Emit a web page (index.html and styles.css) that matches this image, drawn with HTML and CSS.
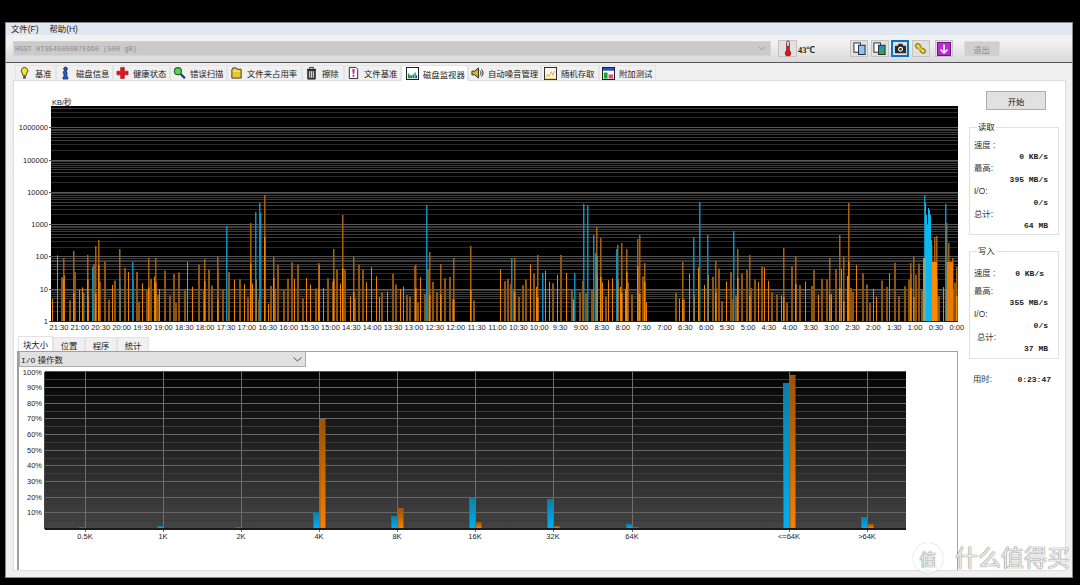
FILE: index.html
```html
<!DOCTYPE html>
<html lang="zh-CN">
  <head>
    <meta charset="UTF-8" />
    <title>HD Tune Pro</title>
    <link rel="stylesheet" href="styles.css">
  </head>
  <body>
    <svg class="defs" width="0" height="0">
      <symbol id="i-bulb" viewBox="0 0 14 14"><path d="M7 1a3.6 3.6 0 0 0-2.4 6.2L5.6 10h2.8l1-2.8A3.6 3.6 0 0 0 7 1z" fill="#f4e22a" stroke="#333"/><rect x="5.5" y="10.5" width="3" height="2.5" fill="#444"/></symbol>
      <symbol id="i-info" viewBox="0 0 14 14"><circle cx="7" cy="2.6" r="1.9" fill="#1f5fd0" stroke="#123"/><path d="M4.6 5.5h4v6h1v2H4.300v-2h1v-4h-.7z" fill="#1f5fd0" stroke="#123" stroke-width=".7"/></symbol>
      <symbol id="i-cross" viewBox="0 0 14 14"><path d="M5 1h4v4h4v4H9v4H5V9H1V5h4z" fill="#e3131b" stroke="#811" stroke-width=".6"/></symbol>
      <symbol id="i-lens" viewBox="0 0 14 14"><circle cx="5.300" cy="5" r="3.800" fill="#63d04a" stroke="#1d6a2c" stroke-width="1.200"/><path d="M8.200 8l4.600 4.600" stroke="#123a8c" stroke-width="2.400"/></symbol>
      <symbol id="i-folder" viewBox="0 0 14 14"><path d="M2 3.500l1-2h4l1 1.500h4v9.500H2z" fill="#e8c72a" stroke="#333"/><path d="M3 5h8" stroke="#fff3a8"/></symbol>
      <symbol id="i-trash" viewBox="0 0 14 14"><path d="M2 2.500h10v1.500H2z" fill="#333"/><path d="M3 4h8v9.500H3z" fill="#555" stroke="#111"/><path d="M5 5v7M7 5v7M9 5v7" stroke="#ddd"/><path d="M5 2.500V1h4v1.500" fill="none" stroke="#222"/></symbol>
      <symbol id="i-doc" viewBox="0 0 14 14"><path d="M2.500 1h7l2 2v10h-9z" fill="#fff" stroke="#222"/><path d="M5.500 3h3l-.8 5H6.300z" fill="#d11fb5"/><circle cx="7" cy="10" r="1.200" fill="#d11fb5"/></symbol>
      <symbol id="i-monitor" viewBox="0 0 14 14"><rect x=".5" y=".5" width="13" height="13" fill="#fff" stroke="#111"/><path d="M2 12V7h1.500v5zM5 12V9h1.500v3zM9 12V6h1.500v6z" fill="#12a02c"/><path d="M3.500 12V9H5v3zM7 12V8h1.500v4zM10.500 12V9H12v3z" fill="#1c49c9"/></symbol>
      <symbol id="i-speaker" viewBox="0 0 14 14"><path d="M1 5h3l4-3.500v11L4 9H1z" fill="#d9b81e" stroke="#222"/><path d="M9.500 4.500a3 3 0 0 1 0 5M11 3a5 5 0 0 1 0 8" fill="none" stroke="#222"/></symbol>
      <symbol id="i-random" viewBox="0 0 14 14"><rect x=".5" y=".5" width="13" height="13" fill="#fdf8ea" stroke="#222"/><path d="M2 11l2-3 1.500 2L8 5l1.500 4L12 4" fill="none" stroke="#ee9a5c"/><path d="M2 12.500h10" stroke="#e6c75c"/></symbol>
      <symbol id="i-extra" viewBox="0 0 14 14"><rect x=".5" y=".5" width="13" height="13" fill="#fff" stroke="#111"/><path d="M1 1h12v3H1z" fill="#2a4fc4"/><path d="M2 6h4v6.500H2z" fill="#14a52d"/><path d="M7 8h5v4.500H7z" fill="#e0507a"/></symbol>
      <symbol id="i-therm" viewBox="0 0 14 18"><rect x="5.500" y="1" width="3" height="12" rx="1.500" fill="#e9e3e3" stroke="#733"/><rect x="6" y="6" width="2" height="8" fill="#e0141c"/><circle cx="7" cy="14" r="3" fill="#e0141c" stroke="#811" stroke-width=".6"/></symbol>
      <symbol id="i-copy-b" viewBox="0 0 14 14"><rect x="1" y="1" width="7" height="10" fill="#fff" stroke="#223"/><rect x="6" y="3.500" width="7" height="10" fill="#8cc4ee" stroke="#223"/></symbol>
      <symbol id="i-copy-g" viewBox="0 0 14 14"><rect x="1" y="1" width="7" height="10" fill="#fff" stroke="#223"/><rect x="6" y="3.500" width="7" height="10" fill="#2fa84a" stroke="#223"/><path d="M7 4.500h5V8H7z" fill="#3d7fe0"/></symbol>
      <symbol id="i-camera" viewBox="0 0 14 14"><path d="M1 4h3l1-2h4l1 2h3v8H1z" fill="#2b2b2b"/><circle cx="7" cy="7.800" r="2.600" fill="#fff"/><circle cx="7" cy="7.800" r="1.400" fill="#2b2b2b"/></symbol>
      <symbol id="i-link" viewBox="0 0 14 14"><g fill="none" stroke="#a89212" stroke-width="2"><ellipse cx="4.500" cy="4.500" rx="2.800" ry="2.200" transform="rotate(40 4.500 4.500)"/><ellipse cx="9.500" cy="9.500" rx="2.800" ry="2.200" transform="rotate(40 9.500 9.500)"/></g><path d="M4 5l5 4" stroke="#e6d23c" stroke-width="2"/></symbol>
      <symbol id="i-down" viewBox="0 0 14 14"><rect x=".5" y=".5" width="13" height="13" fill="#b92ad0" stroke="#70147f"/><path d="M7 2.500v8M3.500 7.500L7 11l3.500-3.500" fill="none" stroke="#fff" stroke-width="1.500"/></symbol>
    </svg>

    <div class="window">
      <div class="menubar">
        <span class="menu-item">文件(F)</span>
        <span class="menu-item">帮助(H)</span>
      </div>

      <div class="toolbar">
        <div class="disk-select">
          <span>HGST HTS545050B7E660 (500 gB)</span>
          <svg class="chevron" width="8" height="5" viewBox="0 0 8 5"><path d="M.5.500L4 4 7.500.500" fill="none" stroke="#a4a4a4"/></svg>
        </div>
        <div class="tool-btn therm"><svg width="14" height="17"><use href="#i-therm"/></svg></div>
        <span class="temp">43℃</span>
        <div class="tool-btn first"><svg width="13" height="13"><use href="#i-copy-b"/></svg></div>
        <div class="tool-btn"><svg width="13" height="13"><use href="#i-copy-g"/></svg></div>
        <div class="tool-btn selected"><svg width="13" height="13"><use href="#i-camera"/></svg></div>
        <div class="tool-btn"><svg width="13" height="13"><use href="#i-link"/></svg></div>
        <div class="tool-btn down"><svg width="14" height="14"><use href="#i-down"/></svg></div>
        <div class="exit-btn">退出</div>
      </div>

      <div class="tabs">
        <div class="tab w41"><svg width="13" height="14"><use href="#i-bulb"/></svg>基准</div>
        <div class="tab w57"><svg width="13" height="14"><use href="#i-info"/></svg>磁盘信息</div>
        <div class="tab w57"><svg width="13" height="14"><use href="#i-cross"/></svg>健康状态</div>
        <div class="tab w57"><svg width="13" height="14"><use href="#i-lens"/></svg>错误扫描</div>
        <div class="tab w75"><svg width="13" height="14"><use href="#i-folder"/></svg>文件夹占用率</div>
        <div class="tab w42"><svg width="13" height="14"><use href="#i-trash"/></svg>擦除</div>
        <div class="tab w57"><svg width="13" height="14"><use href="#i-doc"/></svg>文件基准</div>
        <div class="tab w67 active"><svg width="13" height="13"><use href="#i-monitor"/></svg>磁盘监视器</div>
        <div class="tab w73"><svg width="13" height="14"><use href="#i-speaker"/></svg>自动噪音管理</div>
        <div class="tab w58"><svg width="13" height="13"><use href="#i-random"/></svg>随机存取</div>
        <div class="tab w57"><svg width="13" height="13"><use href="#i-extra"/></svg>附加测试</div>
      </div>

      <div class="content">
        <div class="left">
          <svg id="rate-chart" class="rate-chart" width="950" height="240" viewBox="15 96 950 240"></svg>

          <div class="subtabs">
            <div class="subtab active">块大小</div>
            <div class="subtab">位置</div>
            <div class="subtab">程序</div>
            <div class="subtab">统计</div>
          </div>
          <div class="subpanel">
            <div class="combo">
              <span><span class="mono">I/O</span> 操作数</span>
              <svg width="9" height="5" viewBox="0 0 9 5"><path d="M.5.500L4.500 4 8.500.500" fill="none" stroke="#555"/></svg>
            </div>
            <svg id="block-chart" class="block-chart" width="937" height="203" viewBox="19 366 937 203"></svg>
          </div>
        </div>

        <div class="side">
          <div class="start-btn">开始</div>

          <fieldset class="group read">
            <legend>读取</legend>
            <div class="stat-label">速度 :</div>
            <div class="stat-value">0 KB/s</div>
            <div class="stat-label">最高:</div>
            <div class="stat-value">395 MB/s</div>
            <div class="stat-label">I/O:</div>
            <div class="stat-value">0/s</div>
            <div class="stat-label">总计:</div>
            <div class="stat-value">64 MB</div>
          </fieldset>

          <fieldset class="group write">
            <legend>写入</legend>
            <div class="stat-row first-row">
              <div class="stat-label">速度 :</div>
              <div class="stat-value shifted">0 KB/s</div>
            </div>
            <div class="stat-label">最高:</div>
            <div class="stat-value">355 MB/s</div>
            <div class="stat-label">I/O:</div>
            <div class="stat-value">0/s</div>
            <div class="stat-label indent">总计:</div>
            <div class="stat-value">37 MB</div>
          </fieldset>

          <div class="stat-row elapsed">
            <div class="stat-label">用时:</div>
            <div class="stat-value">0:23:47</div>
          </div>
        </div>
      </div>
    </div>

    <div class="watermark">
      <div class="wm-logo">值</div>
      <div class="wm-text">什么值得买</div>
    </div>

    <script src="charts.js"></script>
  </body>
</html>
```

FILE: styles.css
```css
body {
  margin: 0;
  height: 585px;
  overflow: hidden;
  background-color: #000000;
  color: #222222;
  font-family: "Liberation Sans", "Noto Sans CJK SC", sans-serif;
  font-size: 8.4px;
}

.defs {
  position: absolute;
}

.mono {
  font-family: "Liberation Mono", monospace;
  font-size: 8px;
}

.window {
  width: 1068px;
  height: 556px;
  margin: 22px 0 0 5px;
  box-sizing: border-box;
  border: 1px solid #8a8a8a;
  background-color: #f0f0f0;
  display: flex;
  flex-direction: column;
}

.menubar {
  height: 12px;
  box-sizing: border-box;
  padding: 0 0 2px 5px;
  background-color: #e0e7f0;
  display: flex;
  align-items: center;
  gap: 11px;
}

.toolbar {
  height: 28px;
  box-sizing: border-box;
  border-bottom: 1px solid #555555;
  background: linear-gradient(#f2f2f2, #f0f0f0 30%, #d9d9d9);
  display: flex;
  align-items: center;
  padding-left: 7px;
}

.disk-select {
  width: 758px;
  height: 15px;
  box-sizing: border-box;
  background-color: #cacaca;
  border: 1px solid #d4d4d4;
  color: #8a8a8a;
  font-family: "Liberation Mono", monospace;
  font-size: 7px;
  display: flex;
  align-items: center;
  justify-content: space-between;
  padding: 0 4px 0 1px;
}

.tool-btn {
  width: 18px;
  height: 17px;
  box-sizing: border-box;
  margin-right: 2.500px;
  background-color: #e1e1e1;
  border: 1px solid #c4c4c4;
  display: flex;
  align-items: center;
  justify-content: center;
}

.tool-btn.therm {
  width: 19px;
  margin-left: 7px;
  margin-right: 1px;
}

.tool-btn.first {
  margin-left: 32px;
}

.tool-btn.selected {
  border: 2px solid #0a72c8;
}

.tool-btn.down {
  margin-left: 3px;
}

.temp {
  width: 20px;
  font-family: "Liberation Serif", "Noto Sans CJK SC", serif;
  font-weight: bold;
  font-size: 8.500px;
}

.exit-btn {
  width: 36px;
  height: 16px;
  margin-left: 8px;
  box-sizing: border-box;
  background-color: #cfcfcf;
  border: 1px solid #dcdcdc;
  color: #8f8f8f;
  display: flex;
  align-items: center;
  justify-content: center;
}

.tabs {
  height: 17px;
  padding: 2px 0 0 9px;
  box-sizing: border-box;
  display: flex;
  align-items: flex-end;
}

.tab {
  height: 15px;
  box-sizing: border-box;
  background-color: #f0f0f0;
  border: 1px solid #e4e4e4;
  border-bottom: none;
  display: flex;
  align-items: center;
  gap: 4px;
  padding-left: 2px;
  white-space: nowrap;
}

.tab.active {
  height: 16px;
  background-color: #ffffff;
  padding-left: 4px;
  margin-bottom: -1px;
  position: relative;
}

.w41 { width: 41px; }
.w42 { width: 42px; }
.w57 { width: 57px; }
.w58 { width: 58px; }
.w67 { width: 67px; }
.w73 { width: 73px; }
.w75 { width: 75px; }

.content {
  width: 1053px;
  height: 491px;
  margin-left: 7px;
  box-sizing: border-box;
  background-color: #ffffff;
  border: 1px solid #dedede;
  display: flex;
}

.left {
  width: 952px;
}

.rate-chart {
  display: block;
  margin-left: 1px;
  margin-top: 15px;
}

.rate-chart text,
.block-chart text {
  font-family: "Liberation Sans", "Noto Sans CJK SC", sans-serif;
  font-size: 7.500px;
  fill: #1c1c1c;
}

.subtabs {
  height: 15px;
  margin-left: 4px;
  display: flex;
  align-items: flex-end;
}

.subtab {
  width: 32px;
  height: 14px;
  box-sizing: border-box;
  background-color: #f0f0f0;
  border: 1px solid #e2e2e2;
  border-bottom: none;
  display: flex;
  align-items: center;
  justify-content: center;
}

.subtab.active {
  width: 35px;
  height: 15px;
  background-color: #ffffff;
}

.subpanel {
  width: 941px;
  height: 219px;
  margin-left: 3px;
  box-sizing: border-box;
  border-left: 2px solid #a0a0a0;
  border-top: 1px solid #a0a0a0;
  border-right: 1px solid #a0a0a0;
}

.combo {
  width: 287px;
  height: 15px;
  box-sizing: border-box;
  background-color: #e1e1e1;
  border: 1px solid #adadad;
  border-top: none;
  font-size: 8.400px;
  display: flex;
  align-items: center;
  justify-content: space-between;
  padding: 0 3px 0 1px;
}

.block-chart {
  display: block;
}

.side {
  flex: 1;
  padding-top: 10px;
}

.start-btn {
  width: 60px;
  height: 19px;
  margin-left: 20px;
  box-sizing: border-box;
  background-color: #e1e1e1;
  border: 1px solid #adadad;
  display: flex;
  align-items: center;
  justify-content: center;
}

.group {
  width: 90px;
  height: 112px;
  margin: 13px 0 0 3px;
  padding: 9px 10px 0 4px;
  box-sizing: border-box;
  border: 1px solid #e0e0e0;
  min-inline-size: 0;
}

.group.write {
  margin-top: 12px;
  padding-top: 13px;
}

.group legend {
  padding: 0 1px;
  margin-left: 3px;
  font-size: 8.400px;
  line-height: 8px;
}

.stat-label {
  height: 11px;
  line-height: 11px;
  color: #333333;
}

.stat-label.indent {
  margin-left: 3px;
}

.stat-value {
  height: 12px;
  line-height: 12px;
  text-align: right;
  white-space: pre;
  font-family: "Liberation Mono", monospace;
  font-weight: bold;
  font-size: 8px;
  color: #222222;
}

.stat-value.shifted {
  margin-right: 4px;
}

.stat-row {
  display: flex;
  justify-content: space-between;
}

.stat-row.first-row {
  margin-bottom: 6px;
}

.elapsed {
  width: 78px;
  margin: 15px 0 0 7px;
}

.watermark {
  position: absolute;
  left: 913px;
  top: 543px;
  display: flex;
  align-items: center;
  gap: 12px;
  color: rgba(255, 255, 255, 0.85);
  text-shadow: 0 0 1px #777777, 0 0 1px #777777;
}

.wm-logo {
  width: 26px;
  height: 26px;
  border: 2px solid rgba(255, 255, 255, 0.85);
  border-radius: 50%;
  box-shadow: 0 0 1px #888888;
  font-size: 17px;
  display: flex;
  align-items: center;
  justify-content: center;
}

.wm-text {
  font-size: 23px;
  line-height: 26px;
  white-space: nowrap;
}
```

FILE: charts.js
```js
var NS = "http://www.w3.org/2000/svg";

function add(svg, name, attrs, text) {
  var el = document.createElementNS(NS, name);
  for (var key in attrs) {
    el.setAttribute(key, attrs[key]);
  }
  if (text) {
    el.textContent = text;
  }
  svg.appendChild(el);
  return el;
}

// small seeded random so the picture is the same on every load
var seed = 41;
function rnd() {
  seed = (seed * 16807) % 2147483647;
  return seed / 2147483647;
}

function drawRateChart() {
  var svg = document.getElementById("rate-chart");
  var left = 51, right = 958, top = 106, bottom = 321, decade = 32.3;

  add(svg, "rect", { x: left, y: top, width: right - left, height: bottom - top, fill: "#000" });

  // log grid, lines crowd together near each decade
  for (var d = 0; d < 7; d++) {
    for (var k = 1; k < 10; k++) {
      var y = Math.round(bottom - decade * (d + Math.log10(k)));
      if (y <= top || y >= bottom) continue;
      var color = k == 1 ? "#585858" : k < 4 ? "#2a2a2a" : "#3c3c3c";
      add(svg, "rect", { x: left, y: y, width: right - left, height: 1, fill: color });
    }
  }

  var labels = ["1", "10", "100", "1000", "10000", "100000", "1000000"];
  for (var i = 0; i < labels.length; i++) {
    var ly = bottom - decade * i;
    add(svg, "text", { x: 48, y: ly + 3, "text-anchor": "end" }, labels[i]);
    add(svg, "rect", { x: 49, y: Math.round(ly), width: 2, height: 1, fill: "#555" });
  }
  add(svg, "text", { x: 52, y: 105 }, "KB/秒");

  // ordinary writes, spread out with black between them
  for (var x = 52; x < 957; x += 2.4 + rnd() * 3.6) {
    if (x > 455 && x < 503 && rnd() < 0.85) continue;
    if (x > 650 && x < 670 && rnd() < 0.7) continue;
    var h = 16 + rnd() * 38 + rnd() * rnd() * 16;
    var dim = rnd() < 0.55;
    add(svg, "rect", {
      x: Math.round(x), y: bottom - h, width: dim ? 2 : 1, height: h,
      fill: dim ? "#8f5410" : "#f08000"
    });
  }

  var tallOrange = [
    [73, 251], [87, 255], [95, 246], [98, 240], [63, 258], [119, 249], [155, 258], [148, 258],
    [204, 259], [217, 257], [250, 223], [264, 195], [273, 257], [318, 263], [333, 249],
    [342, 215], [353, 257], [415, 265], [429, 252], [440, 264], [453, 258], [470, 246],
    [514, 258], [537, 255], [596, 227], [600, 238], [617, 245], [621, 243], [626, 249],
    [637, 239], [639, 235], [644, 263], [682, 262], [715, 261], [737, 249], [749, 255],
    [783, 248], [795, 256], [829, 258], [839, 235], [843, 257], [848, 203], [910, 263],
    [913, 257], [931, 245], [934, 237], [936, 236], [946, 223], [948, 243], [952, 258], [956, 267]
  ];
  for (var o = 0; o < tallOrange.length; o++) {
    var b = tallOrange[o];
    add(svg, "rect", { x: b[0], y: b[1], width: 1.5, height: bottom - b[1], fill: "#a8610f" });
    var lit = b[1] + (bottom - b[1]) * (0.3 + rnd() * 0.4);
    add(svg, "rect", { x: b[0], y: lit, width: 1.5, height: bottom - lit, fill: "#f58400" });
  }

  // heavy block at the end of the run
  add(svg, "rect", { x: 932, y: 262, width: 5, height: 59, fill: "#ff8a00" });
  add(svg, "rect", { x: 947, y: 262, width: 6, height: 59, fill: "#e87c00" });

  var blue = [
    [83, 293], [92, 267], [119, 277], [132, 262], [226, 226], [255, 212], [259, 203],
    [260, 213], [426, 205], [511, 258], [542, 273], [574, 273], [583, 204], [587, 205],
    [593, 235], [595, 253], [616, 249], [693, 237], [699, 202], [707, 235], [733, 231],
    [924, 195], [945, 204]
  ];
  for (var n = 0; n < blue.length; n++) {
    add(svg, "rect", { x: blue[n][0], y: blue[n][1], width: 1.5, height: bottom - blue[n][1], fill: "#1190bd" });
  }

  // read burst
  var burst = [[925, 203], [926, 215], [927, 225], [928, 208], [929, 210], [930, 215], [931, 240]];
  for (var m = 0; m < burst.length; m++) {
    add(svg, "rect", { x: burst[m][0], y: burst[m][1], width: 1, height: bottom - burst[m][1], fill: "#0cb6ee" });
  }
  add(svg, "rect", { x: 923, y: 258, width: 3, height: 63, fill: "#7fa88f" });

  add(svg, "rect", { x: left, y: bottom, width: right - left, height: 1, fill: "#222" });

  var h0 = 21, m0 = 30;
  for (var t = 0; t < 44; t++) {
    var tx = 59 + t * 20.88;
    var total = (h0 * 60 + m0) - t * 30;
    var mm = total % 60;
    var label = Math.floor(total / 60) + ":" + (mm < 10 ? "0" + mm : mm);
    add(svg, "text", { x: tx, y: 330, "text-anchor": "middle" }, label);
  }
}

function addGradient(defs, id, from, to) {
  var grad = add(defs, "linearGradient", { id: id, x1: 0, y1: 0, x2: 0, y2: 1 });
  add(grad, "stop", { offset: "0", "stop-color": from });
  add(grad, "stop", { offset: "1", "stop-color": to });
}

function drawBlockChart() {
  var svg = document.getElementById("block-chart");
  var left = 45, right = 906, top = 371, bottom = 528;

  var defs = add(svg, "defs", {});
  addGradient(defs, "bg", "#030303", "#444444");
  addGradient(defs, "blue-bar", "#0a7ea8", "#00b0f0");
  addGradient(defs, "orange-bar", "#9a5208", "#f88000");

  add(svg, "rect", { x: left, y: top, width: right - left, height: bottom - top, fill: "url(#bg)" });

  for (var p = 5; p < 100; p += 5) {
    var y = Math.round(bottom - 1 - p * 1.565);
    add(svg, "rect", { x: left, y: y, width: right - left, height: 1, fill: p % 10 == 0 ? "#666" : "#3a3a3a" });
  }

  for (var v = 10; v <= 100; v += 10) {
    add(svg, "text", { x: 42, y: bottom - 1 - v * 1.565 + 3, "text-anchor": "end" }, v + "%");
  }

  var cats = [
    ["0.5K", 85, 526, 527], ["1K", 163, 525, 528], ["2K", 241, 526, 528], ["4K", 319, 511, 418],
    ["8K", 397, 515, 507], ["16K", 475, 496, 521], ["32K", 553, 498, 525], ["64K", 632, 523, 526],
    ["<=64K", 789, 382, 374], [">64K", 867, 516, 523]
  ];
  for (var i = 0; i < cats.length; i++) {
    var c = cats[i];
    add(svg, "rect", { x: c[1], y: top, width: 1, height: bottom - top + 3, fill: "#6e6e6e" });
    add(svg, "text", { x: c[1], y: 538, "text-anchor": "middle" }, c[0]);
    bar(svg, c[1] - 6, c[2], "url(#blue-bar)", "#0b7fa8");
    bar(svg, c[1] + 0.5, c[3], "url(#orange-bar)", "#a9590c");
  }

  add(svg, "rect", { x: left, y: bottom - 1, width: right - left, height: 2, fill: "#1a1a1a" });
  add(svg, "rect", { x: left - 1, y: top, width: 1, height: bottom - top, fill: "#444" });
  add(svg, "rect", { x: left, y: top - 1, width: right - left, height: 1, fill: "#555" });
}

function bar(svg, x, top, fill, edge) {
  var bottom = 527;
  if (top >= bottom) return;
  add(svg, "rect", { x: x, y: top, width: 6, height: bottom - top, fill: fill });
  add(svg, "rect", { x: x, y: top, width: 6, height: Math.min(1, bottom - top), fill: edge });
  add(svg, "rect", { x: x, y: top, width: 1, height: bottom - top, fill: edge });
}

drawRateChart();
drawBlockChart();
```
